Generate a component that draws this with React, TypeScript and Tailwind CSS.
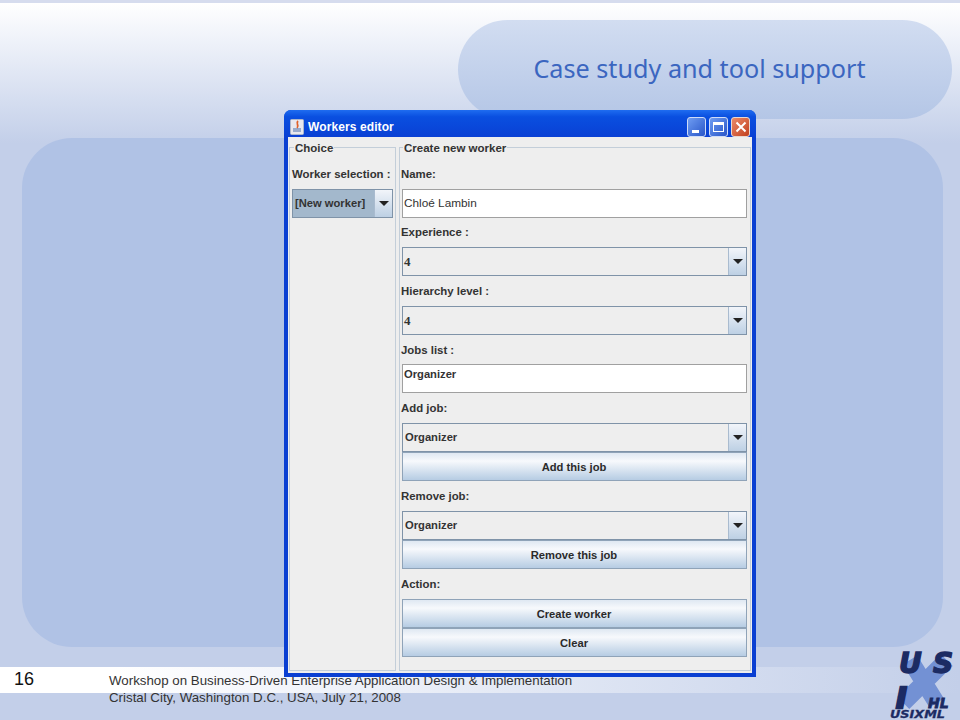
import React from "react";

const blueBtn = "flex h-[29px] w-full items-center justify-center border border-[#8fa3b8] bg-gradient-to-b from-[#dfe8f2] via-[#f7f9fc] via-30% to-[#b6cce3] pr-[1px] pt-[1px] text-[11.2px] font-bold text-[#2a2a2a]";

function Label({ children }: { children: React.ReactNode }) {
  return <div className="-ml-[1px] flex h-[15px] items-center whitespace-nowrap text-[11.4px] font-bold leading-none text-[#333]">{children}</div>;
}

function Arrow() {
  return <span className="h-0 w-0 border-x-[5px] border-t-[5px] border-x-transparent border-t-[#222]" />;
}

function Combo({ value, serif }: { value: string; serif?: boolean }) {
  return (
    <div className="flex h-[29px] w-full items-stretch border border-[#7f93a8] bg-[#eeeeee]">
      <div className={`flex flex-1 items-center font-bold text-[#333] ${serif ? "pl-[1px] font-['Liberation_Serif'] text-[13px]" : "pl-[2px] text-[11.2px]"}`}>{value}</div>
      <div className="flex w-[18px] items-center justify-center border-l border-[#a9bbcf] bg-gradient-to-b from-[#f2f5fa] to-[#bdd0e4]"><Arrow /></div>
    </div>
  );
}

function Legend({ children, className }: { children: React.ReactNode; className: string }) {
  return <span className={`absolute top-[-6px] bg-[#eeeeee] px-[1px] text-[11.5px] font-bold leading-[12px] text-[#333] ${className}`}>{children}</span>;
}

function Logo() {
  const letter = { fontFamily: "'DejaVu Sans'", fontWeight: 700, fontStyle: "italic", fill: "#1c2b63", stroke: "#1c2b63" };
  return (
    <svg width="70" height="80" viewBox="0 -10 70 80" className="block">
      <path d="M20 10 L46.7 53 M56.7 10 L13.3 53" stroke="#7391d4" strokeWidth="17" fill="none" />
      <text x="9" y="23" fontSize="28" strokeWidth="1.4" {...letter}>U</text>
      <text x="43" y="23" fontSize="28" strokeWidth="1.4" {...letter}>S</text>
      <text x="6" y="58" fontSize="29" strokeWidth="2.5" {...letter}>I</text>
      <text x="38" y="58" fontSize="14" strokeWidth="0.8" {...letter}>HL</text>
      <text x="0" y="68" fontSize="10.5" strokeWidth="0.3" textLength="55" lengthAdjust="spacingAndGlyphs" {...letter}>USIXML</text>
    </svg>
  );
}

export default function App() {
  return (
    <div className="relative h-[720px] w-[960px] overflow-hidden bg-[#c3cfe9] font-['Liberation_Sans',sans-serif]">
      {/* slide background */}
      <div className="absolute inset-x-0 top-0 h-[3px] bg-[#d6dcee]" />
      <div className="absolute inset-x-0 top-[3px] h-[140px] bg-gradient-to-b from-[#ffffff] to-[#c3cfe9]" />
      <div className="absolute left-[22px] top-[138px] h-[509px] w-[921px] rounded-[50px] bg-[#b0c2e5]" />
      <div className="absolute left-[458px] top-[20px] flex h-[99px] w-[494px] items-center justify-center rounded-[50px] bg-gradient-to-b from-[#d2ddf1] to-[#b4c6e6]">
        <span className="mb-[2px] mr-[11px] whitespace-nowrap font-['Noto_Sans',sans-serif] text-[25.2px] leading-none text-[#3b66c0]">Case study and tool support</span>
      </div>

      {/* footer */}
      <div className="absolute inset-x-0 top-[667px] h-[26px] bg-gradient-to-r from-[#ffffff] from-[12%] via-[#e6ebf6] to-[#c3cfe9]" />
      <div className="absolute left-[14px] top-[666px] text-[18px] leading-[26px] text-[#111]">16</div>
      <div className="absolute left-[109px] top-[672px] text-[13.3px] leading-[17px] text-[#333]">
        <div>Workshop on Business-Driven Enterprise Application Design &amp; Implementation</div>
        <div>Cristal City, Washington D.C., USA, July 21, 2008</div>
      </div>
      <div className="absolute left-[890px] top-[640px]"><Logo /></div>

      {/* window */}
      <div className="absolute left-[284px] top-[110px] flex h-[567px] w-[472px] flex-col rounded-t-[7px] bg-[#0a3fd2]">
        <div className="flex h-[27px] shrink-0 items-center rounded-t-[7px] bg-gradient-to-b from-[#1f6cf0] from-0% via-[#0a4fe0] via-25% to-[#0a40d4] pl-[6px] pr-[6px] pt-[6px]">
          <svg width="14" height="16" viewBox="0 0 14 16" className="mr-[4px]">
            <rect x="0.5" y="0.5" width="13" height="15" rx="1" fill="#e8e8ee" stroke="#aab6cc" />
            <path d="M8 2 C5 5 10 6 7 9" fill="none" stroke="#e0622a" strokeWidth="1.8" />
            <path d="M3 10 H11 M3 12 H11" stroke="#4a6fa8" strokeWidth="1" />
          </svg>
          <span className="flex-1 text-[12px] font-bold tracking-[0.1px] text-white">Workers editor</span>
          <div className="flex gap-[3px]">
            <div className="flex h-[20px] w-[19px] items-end rounded-[3px] border border-[#cfdcf8] bg-gradient-to-br from-[#6f9cf2] to-[#2a55c8] pb-[3px] pl-[4px]"><span className="h-[3px] w-[7px] bg-white" /></div>
            <div className="flex h-[20px] w-[19px] items-center justify-center rounded-[3px] border border-[#cfdcf8] bg-gradient-to-br from-[#6f9cf2] to-[#2a55c8]"><span className="h-[10px] w-[11px] border border-t-[3px] border-white" /></div>
            <div className="flex h-[20px] w-[19px] items-center justify-center rounded-[3px] border border-[#e8d8d0] bg-gradient-to-br from-[#ea8a68] to-[#c23f1c]">
              <svg width="12" height="12" viewBox="0 0 12 12"><path d="M1.5 1.5 L10.5 10.5 M10.5 1.5 L1.5 10.5" stroke="#fff" strokeWidth="2" /></svg>
            </div>
          </div>
        </div>
        <div className="mx-[4px] mb-[4px] flex flex-1 bg-[#eeeeee] pl-[1px] pr-[1px] pt-[10px]">
          <div className="relative mb-[2px] w-[107px] border border-[#c3ced9] pl-[2px] pt-[19px]">
            <Legend className="left-[4px]">Choice</Legend>
            <div className="ml-[1px]"><Label>Worker selection :</Label></div>
            <div className="mt-[7px] flex h-[29px] w-[101px] items-stretch border border-[#7f93a8] bg-[#a3b8cc]">
              <div className="flex flex-1 items-center pl-[2px] text-[11.2px] font-bold text-[#333]">[New worker]</div>
              <div className="flex w-[18px] items-center justify-center border-l border-[#a9bbcf] bg-gradient-to-b from-[#f2f5fa] to-[#bdd0e4]"><Arrow /></div>
            </div>
          </div>
          <div className="relative mb-[2px] ml-[3px] flex-1 border border-[#c3ced9] pl-[2px] pr-[3px] pt-[19px]">
            <Legend className="left-[3px]">Create new worker</Legend>
            <Label>Name:</Label>
            <div className="mt-[7px] flex h-[29px] items-center border border-[#a0a0a0] bg-white pl-[1px] text-[11.8px] text-[#333]">Chloé Lambin</div>
            <div className="mt-[7px]"><Label>Experience :</Label></div>
            <div className="mt-[7px]"><Combo value="4" serif /></div>
            <div className="mt-[8px]"><Label>Hierarchy level :</Label></div>
            <div className="mt-[7px]"><Combo value="4" serif /></div>
            <div className="mt-[8px]"><Label>Jobs list :</Label></div>
            <div className="mt-[6px] h-[29px] border border-[#a0a0a0] bg-white pl-[1px] pt-[3px] text-[11.2px] font-bold leading-[13px] text-[#333]">Organizer</div>
            <div className="mt-[8px]"><Label>Add job:</Label></div>
            <div className="mt-[7px]"><Combo value="Organizer" /></div>
            <div className={blueBtn}>Add this job</div>
            <div className="mt-[8px]"><Label>Remove job:</Label></div>
            <div className="mt-[7px]"><Combo value="Organizer" /></div>
            <div className={blueBtn}>Remove this job</div>
            <div className="mt-[8px]"><Label>Action:</Label></div>
            <div className="mt-[7px]"><div className={blueBtn}>Create worker</div></div>
            <div className={blueBtn}>Clear</div>
          </div>
        </div>
      </div>
    </div>
  );
}
